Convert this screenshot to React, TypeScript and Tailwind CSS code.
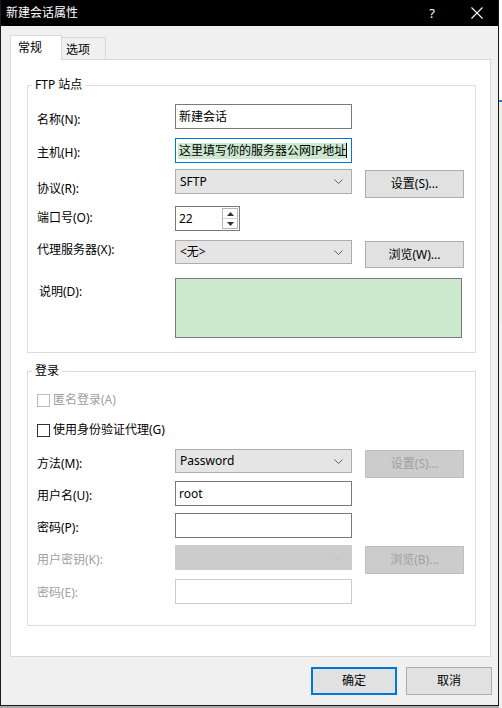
import type { ReactNode } from 'react';
import clsx from 'clsx';

function Chevron({ disabled }: { disabled?: boolean }) {
  return (
    <svg width="9" height="5" viewBox="0 0 9 5" className="shrink-0">
      <path d="M0.5 0.5L4.5 4.5L8.5 0.5" fill="none" stroke={disabled ? '#bdbdbd' : '#606060'} strokeWidth="1" />
    </svg>
  );
}

function Combo({ value, disabled, className }: { value?: string; disabled?: boolean; className?: string }) {
  return (
    <div
      className={clsx(
        'flex w-[177px] items-center justify-between pl-[4px] pr-[8px]',
        disabled ? 'border border-[#cccccc] bg-[#cccccc]' : 'border border-[#adadad] bg-[#e5e5e5]',
        className
      )}
    >
      <span className="leading-[16px]">{value}</span>
      <Chevron disabled={disabled} />
    </div>
  );
}

function TextBox({ value, disabled, className }: { value?: string; disabled?: boolean; className?: string }) {
  return (
    <div
      className={clsx(
        'flex h-[25px] w-[177px] items-center bg-white pl-[3px]',
        disabled ? 'border border-[#cccccc]' : 'border border-[#7a7a7a]',
        className
      )}
    >
      <span className="leading-[16px]">{value}</span>
    </div>
  );
}

function Btn({ children, disabled, className }: { children: ReactNode; disabled?: boolean; className?: string }) {
  return (
    <button
      type="button"
      className={clsx(
        'flex w-[99px] items-center justify-center leading-[16px]',
        disabled ? 'border border-[#bfbfbf] bg-[#cccccc] text-[#a0a0a0]' : 'border border-[#adadad] bg-[#e1e1e1]',
        className
      )}
    >
      {children}
    </button>
  );
}

function Row({
  label,
  labelClass,
  disabled,
  className,
  children,
}: {
  label: string;
  labelClass: string;
  disabled?: boolean;
  className: string;
  children: ReactNode;
}) {
  return (
    <div className={clsx('flex items-start', className)}>
      <span className={clsx('w-[138px] shrink-0 leading-[16px]', labelClass, disabled && 'text-[#a0a0a0]')}>{label}</span>
      {children}
    </div>
  );
}

function CheckBox({ label, disabled, className }: { label: string; disabled?: boolean; className: string }) {
  return (
    <div className={clsx('flex items-center gap-[3px]', className, disabled && 'text-[#a0a0a0]')}>
      <span className={clsx('h-[13px] w-[13px] border bg-white', disabled ? 'border-[#bcbcbc]' : 'border-[#333333]')} />
      <span className="leading-[16px]">{label}</span>
    </div>
  );
}

export default function App() {
  return (
    <div className="flex h-[708px] w-[502px] bg-[#a9a9a9] font-['Noto_Sans','Noto_Sans_CJK_SC',sans-serif] text-[12px] text-black">
      <div className="flex h-[706px] w-[499px] flex-col border-x border-b border-[#1c1c1c] bg-[#f0f0f0]">
        {/* title bar */}
        <div className="flex h-[26px] items-center bg-black pl-[5px] text-white">
          <span className="flex-1 text-[12px] leading-[16px]">新建会话属性</span>
          <span className="mr-[36px] text-[13px] leading-[16px]">?</span>
          <svg width="12" height="12" viewBox="0 0 12 12" className="mr-[15px]">
            <path d="M0.5 0.5L11.5 11.5M11.5 0.5L0.5 11.5" stroke="white" strokeWidth="1.1" />
          </svg>
        </div>

        {/* tabs */}
        <div className="ml-[9px] mt-[9px] flex items-end">
          <div className="relative z-10 -mb-px flex h-[25px] w-[52px] items-start border-x border-t border-[#d9d9d9] bg-white pl-[7px] pt-[4px] leading-[16px]">
            常规
          </div>
          <div className="flex h-[22px] w-[44px] items-start border-r border-t border-[#d9d9d9] bg-[#f0f0f0] pl-[4px] pt-[4px] leading-[16px]">
            选项
          </div>
        </div>

        {/* panel */}
        <div className="ml-[9px] flex h-[598px] w-[481px] flex-col border border-[#d9d9d9] bg-white">
          <fieldset className="ml-[16px] mt-[17px] w-[449px] border border-[#dcdcdc] pb-[14px] pl-[9px]">
            <legend className="-ml-[5px] px-[3px] leading-[16px]">FTP 站点</legend>
            <Row label="名称(N):" labelClass="pt-[8px]" className="mt-[11px]">
              <TextBox value="新建会话" />
            </Row>
            <Row label="主机(H):" labelClass="pt-[7px]" className="mt-[9px]">
              <div className="flex h-[25px] w-[177px] items-center border border-[#0078d7] bg-white pl-[2px]">
                <span className="bg-[#cce8cf] pl-[1px] leading-[16px]">这里填写你的服务器公网IP地址</span>
                <span className="h-[15px] w-px bg-black" />
              </div>
            </Row>
            <Row label="协议(R):" labelClass="pt-[12px]" className="mt-[6px]">
              <Combo value="SFTP" className="h-[25px]" />
              <Btn className="ml-[13px] mt-[1px] h-[28px]">设置(S)...</Btn>
            </Row>
            <Row label="端口号(O):" labelClass="pt-[4px]" className="mt-[8px]">
              <div className="flex h-[25px] w-[65px] items-center justify-between border border-[#7a7a7a] bg-white pl-[3px] pr-px">
                <span className="leading-[16px]">22</span>
                <div className="flex h-[21px] w-[16px] flex-col border border-[#b5b5b5]">
                  <div className="flex flex-1 items-center justify-center border-b border-[#d4d4d4]">
                    <svg width="7" height="4" viewBox="0 0 7 4">
                      <path d="M0 4L3.5 0L7 4Z" fill="#333" />
                    </svg>
                  </div>
                  <div className="flex flex-1 items-center justify-center">
                    <svg width="7" height="4" viewBox="0 0 7 4">
                      <path d="M0 0L3.5 4L7 0Z" fill="#333" />
                    </svg>
                  </div>
                </div>
              </div>
            </Row>
            <Row label="代理服务器(X):" labelClass="pt-[2px]" className="mt-[9px]">
              <Combo value="<无>" className="h-[24px]" />
              <Btn className="ml-[13px] mt-[1px] h-[27px]">浏览(W)...</Btn>
            </Row>
            <Row label="说明(D):" labelClass="pl-[2px] pt-[6px]" className="mt-[10px]">
              <div className="h-[60px] w-[287px] border border-[#7a7a7a] bg-[#cce8cf]" />
            </Row>
          </fieldset>

          <fieldset className="ml-[16px] mt-[10px] w-[449px] border border-[#dcdcdc] pb-[21px] pl-[9px]">
            <legend className="-ml-[5px] px-[3px] leading-[16px]">登录</legend>
            <CheckBox label="匿名登录(A)" disabled className="mt-[13px]" />
            <CheckBox label="使用身份验证代理(G)" className="mt-[14px]" />
            <Row label="方法(M):" labelClass="pt-[7px]" className="mt-[11px]">
              <Combo value="Password" className="h-[24px]" />
              <Btn disabled className="ml-[13px] mt-[1px] h-[28px]">设置(S)...</Btn>
            </Row>
            <Row label="用户名(U):" labelClass="pt-[7px]" className="mt-[3px]">
              <TextBox value="root" />
            </Row>
            <Row label="密码(P):" labelClass="pt-[7px]" className="mt-[7px]">
              <TextBox />
            </Row>
            <Row label="用户密钥(K):" labelClass="pt-[7px]" disabled className="mt-[7px]">
              <Combo disabled className="h-[25px]" />
              <Btn disabled className="ml-[13px] mt-[1px] h-[28px]">浏览(B)...</Btn>
            </Row>
            <Row label="密码(E):" labelClass="pt-[6px]" disabled className="mt-[5px]">
              <TextBox disabled />
            </Row>
          </fieldset>
        </div>

        {/* footer buttons */}
        <div className="mt-[10px] flex justify-end gap-[9px] pr-[6px]">
          <button type="button" className="flex h-[28px] w-[86px] items-center justify-center border-2 border-[#0078d7] bg-[#e1e1e1] leading-[16px]">
            确定
          </button>
          <button type="button" className="flex h-[28px] w-[86px] items-center justify-center border border-[#adadad] bg-[#e1e1e1] leading-[16px]">
            取消
          </button>
        </div>
      </div>

      {/* background window peeking through */}
      <div className="flex flex-1 flex-col bg-[#f7f7f7]">
        <div className="h-[100px] bg-white" />
        <div className="h-[2px] bg-[#2f7fcf]" />
        <div className="h-[220px] bg-[#e9efe9]" />
        <div className="flex-1 bg-[#f2f2f2]" />
      </div>
    </div>
  );
}
